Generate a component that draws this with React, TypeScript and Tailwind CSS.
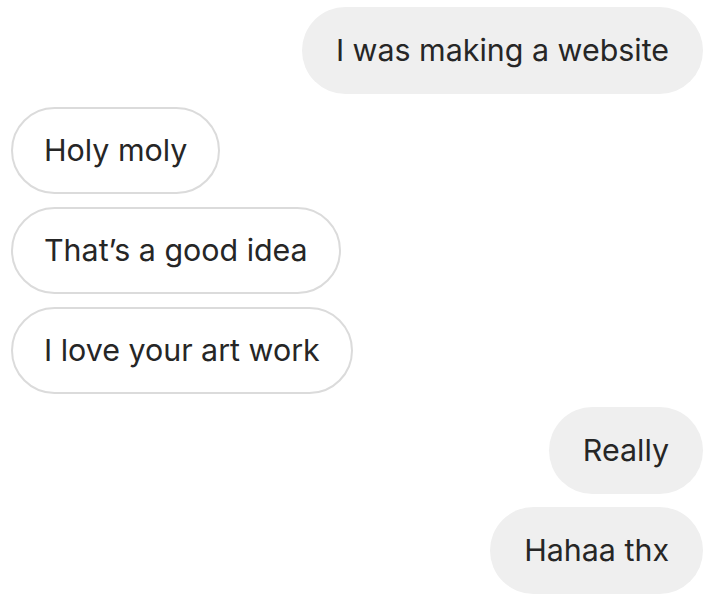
import React from "react";

const msgs: { text: string; me: boolean }[] = [
  { text: "I was making a website", me: true },
  { text: "Holy moly", me: false },
  { text: "That\u2019s a good idea", me: false },
  { text: "I love your art work", me: false },
  { text: "Really", me: true },
  { text: "Hahaa thx", me: true },
];

export default function App() {
  return (
    <div
      className="w-[727px] h-[604px] bg-white flex flex-col gap-[13px] pt-[7px] pl-[11px] pr-[24px] text-[#262626]"
      style={{ fontFamily: "Inter, Roboto, sans-serif" }}
    >
      {msgs.map((m, i) =>
        m.me ? (
          <div key={i} className="flex justify-end">
            <div className="h-[87px] rounded-full bg-[#efefef] pl-[34px] pr-[34px] pb-[1px] flex items-center text-[30.4px] leading-none">
              {m.text}
            </div>
          </div>
        ) : (
          <div key={i} className="flex justify-start">
            <div className="h-[87px] rounded-full bg-white border-2 border-[#dbdbdb] pl-[31px] pr-[31px] pb-[1px] flex items-center text-[30.4px] leading-none">
              {m.text}
            </div>
          </div>
        )
      )}
    </div>
  );
}
